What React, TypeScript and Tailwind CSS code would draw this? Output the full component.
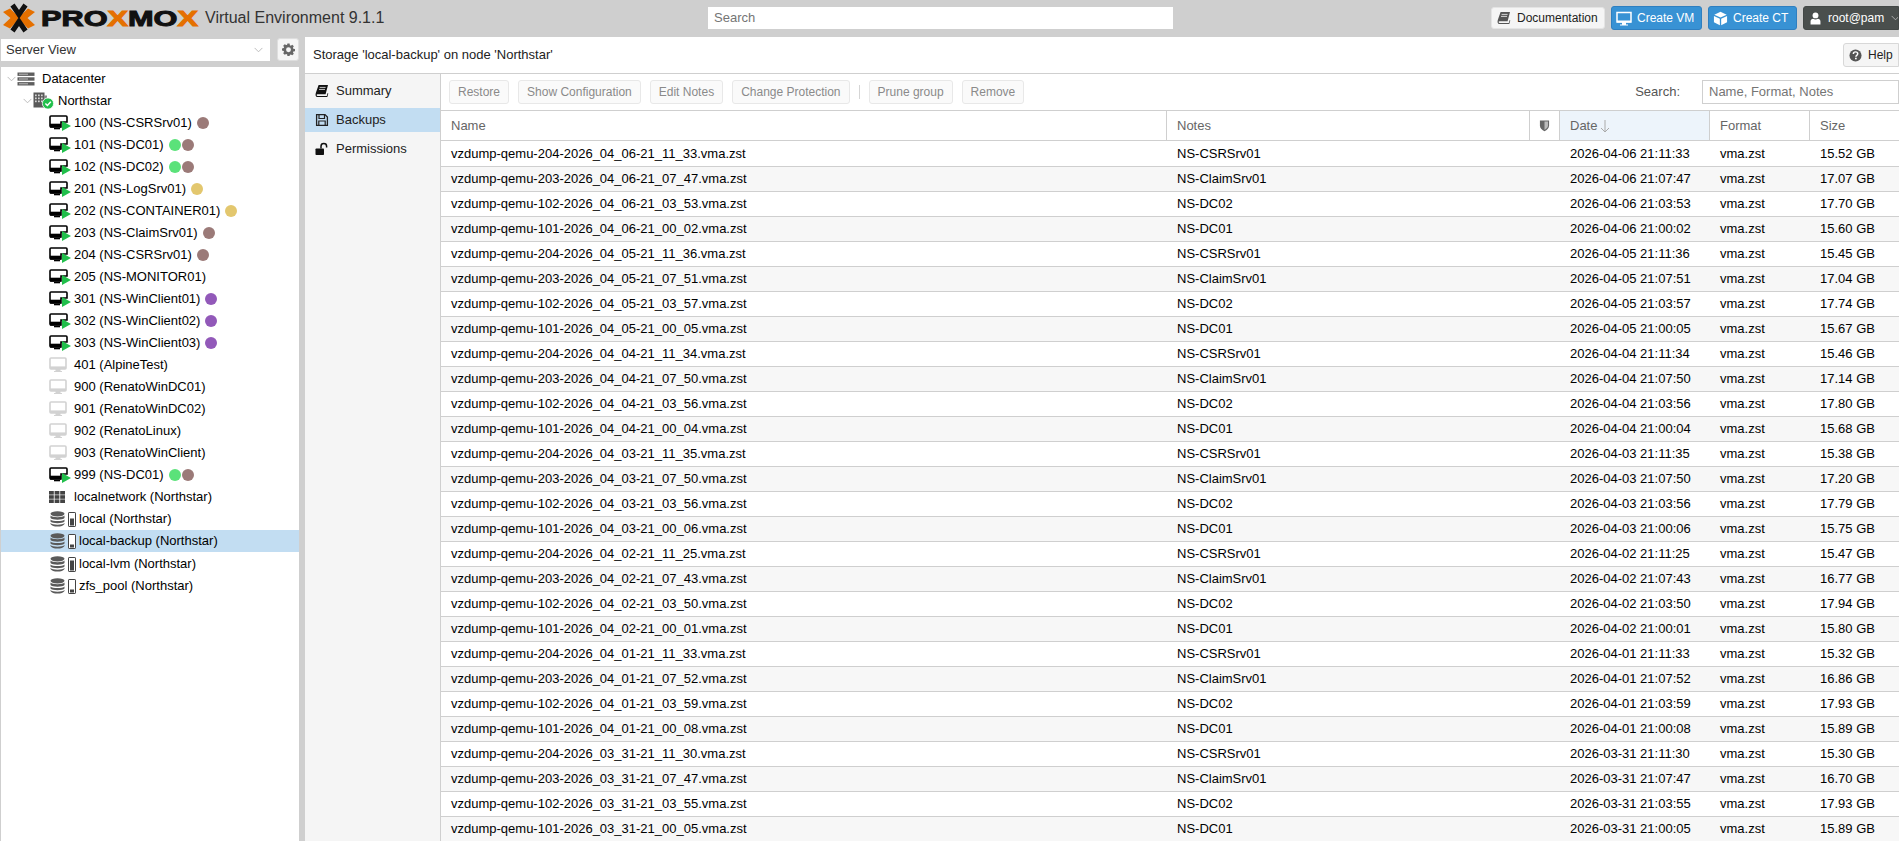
import React from "react";

const FONT = "font-['Liberation_Sans',Arial,sans-serif]";

const Logo = () => (
  <svg width="200" height="36" viewBox="0 0 200 36" className="block">
    <path d="M3 11 L10 7.5 L20 17 L10 27.5 L3 24 L10.5 17 Z" fill="#e57000" />
    <path d="M35 11 L28 7.5 L18 17 L28 27.5 L35 24 L27.5 17 Z" fill="#e57000" />
    <path d="M12.5 4 L19 13.5 L25.5 4 M12.5 30 L19 20.5 L25.5 30" fill="none" stroke="#111" strokeWidth="5" />
    <text
      x="41"
      y="24.5"
      textLength="157"
      lengthAdjust="spacingAndGlyphs"
      fontFamily="'Liberation Sans', Arial, sans-serif"
      fontWeight="700"
      fontSize="22"
      fill="#111"
      stroke="#111"
      strokeWidth="1"
    >
      PRO<tspan fill="#e57000" stroke="#e57000">X</tspan>MO<tspan fill="#e57000" stroke="#e57000">X</tspan>
    </text>
  </svg>
);

const BookIcon = ({ className = "" }: { className?: string }) => (
  <svg viewBox="0 0 14 14" width="14" height="14" className={`shrink-0 ${className}`}>
    <path d="M3.6 1 H13 L10.6 10.3 H2.4 C1.3 10.3 1.5 12 2.6 12 H11.8 L12.6 9 L13.3 9.4 L12.3 13 H2.4 C0.6 13 0.2 11 0.8 9 Z" fill="currentColor" />
    <path d="M4.6 3.4 H10.6 M4 5.4 H10" stroke="#f5f5f5" strokeWidth="0.8" />
  </svg>
);

const SaveIcon = () => (
  <svg viewBox="0 0 14 14" width="14" height="14" className="shrink-0">
    <path d="M1.6 1.6 H10 L12.4 4 V12.4 H1.6 Z" fill="none" stroke="#222" strokeWidth="1.3" />
    <path d="M4 2 V5.5 H9.5 V2" fill="none" stroke="#222" strokeWidth="1.2" />
    <path d="M3.8 12 V8 H10.2 V12" fill="none" stroke="#222" strokeWidth="1.2" />
  </svg>
);

const UnlockIcon = () => (
  <svg viewBox="0 0 14 14" width="14" height="14" className="shrink-0">
    <rect x="0.5" y="6.5" width="8.5" height="6.5" rx="0.8" fill="#111" />
    <path d="M6 6.5 V4.2 C6 2.6 7.2 1.6 8.8 1.6 C10.4 1.6 11.6 2.6 11.6 4.2 V5.6" fill="none" stroke="#111" strokeWidth="1.5" />
  </svg>
);

const GearIcon = () => (
  <svg viewBox="0 0 24 24" width="13" height="13" className="shrink-0">
    <path
      d="M10 1h4l.6 3.1c.6.2 1.2.5 1.7.8l2.7-1.7 2.8 2.8-1.7 2.7c.3.5.6 1.1.8 1.7L24 11v4l-3.1.6c-.2.6-.5 1.2-.8 1.7l1.7 2.7-2.8 2.8-2.7-1.7c-.5.3-1.1.6-1.7.8L14 24h-4l-.6-3.1c-.6-.2-1.2-.5-1.7-.8L5 21.8 2.2 19l1.7-2.7c-.3-.5-.6-1.1-.8-1.7L0 14v-4l3.1-.6c.2-.6.5-1.2.8-1.7L2.2 5 5 2.2l2.7 1.7c.5-.3 1.1-.6 1.7-.8Z M12 8a4.5 4.5 0 1 0 0 9 4.5 4.5 0 0 0 0-9Z"
      fill="#666"
      fillRule="evenodd"
    />
  </svg>
);

const Chevron = ({ className = "" }: { className?: string }) => (
  <svg viewBox="0 0 10 6" width="9" height="6" className={`shrink-0 ${className}`}>
    <path d="M0.7 0.7 L5 5 L9.3 0.7" fill="none" stroke="#b5b5b5" strokeWidth="1" />
  </svg>
);

const VmOn = () => (
  <svg viewBox="0 0 22 18" width="22" height="18" className="-mt-[2px] block shrink-0">
    <path d="M2 3 H17 A1 1 0 0 1 18 4 V9 H12 V14 H2 A1 1 0 0 1 1 13 V4 A1 1 0 0 1 2 3 Z" fill="#fff" stroke="#000" strokeWidth="1.6" />
    <path d="M1 10.7 H12 V14.6 H1 Z" fill="#000" />
    <path d="M5 15 H11 V16.3 H5 Z" fill="#000" />
    <path d="M13 8 L22 13 L13 18 Z" fill="#21bf4b" />
  </svg>
);

const VmOff = () => (
  <svg viewBox="0 0 18 16" width="18" height="16" className="block shrink-0">
    <path d="M1 2 A1 1 0 0 1 2 1 H16 A1 1 0 0 1 17 2 V11 A1 1 0 0 1 16 12 H2 A1 1 0 0 1 1 11 Z" fill="#fff" stroke="#d2d2d2" strokeWidth="1.6" />
    <path d="M1 9.4 H17 V12 H1 Z" fill="#d2d2d2" />
    <path d="M6.5 12 H11.5 V14 H13 V15 H5 V14 H6.5 Z" fill="#d2d2d2" />
  </svg>
);

const DatacenterIcon = () => (
  <svg viewBox="0 0 18 14" width="18" height="14" className="block shrink-0">
    <rect x="0.5" y="0.5" width="17" height="3.4" fill="#5e5e5e" />
    <rect x="0.5" y="5.3" width="17" height="3.4" fill="#5e5e5e" />
    <rect x="0.5" y="10.1" width="17" height="3.4" fill="#5e5e5e" />
    <rect x="2" y="1.7" width="9" height="1" fill="#bdbdbd" />
    <rect x="2" y="6.5" width="9" height="1" fill="#bdbdbd" />
    <rect x="2" y="11.3" width="9" height="1" fill="#bdbdbd" />
  </svg>
);

const NodeIcon = () => (
  <svg viewBox="0 0 22 18" width="22" height="18" className="block shrink-0">
    <rect x="0.5" y="0.5" width="11" height="15" fill="#5a5a5a" />
    <rect x="11" y="3.5" width="3" height="12" fill="#8a8a8a" />
    {[2, 5, 8].flatMap((x) =>
      [2.5, 5.5, 8.5].map((y) => <rect key={`${x}-${y}`} x={x} y={y} width="1.7" height="1.7" fill="#d5d5d5" />)
    )}
    <circle cx="15" cy="11.5" r="5.6" fill="#21bf4b" stroke="#fff" strokeWidth="0.8" />
    <path d="M12.4 11.5 L14.4 13.5 L17.8 9.8" fill="none" stroke="#fff" strokeWidth="1.5" />
  </svg>
);

const SdnIcon = () => (
  <svg viewBox="0 0 16 12" width="16" height="12" className="block shrink-0">
    {[0, 5.6, 11.2].flatMap((x) =>
      [0, 4.2, 8.4].map((y) => <rect key={`${x}-${y}`} x={x} y={y} width="4.8" height="3.6" fill="#444" />)
    )}
  </svg>
);

const StorageIcon = ({ fill }: { fill: number }) => (
  <span className="flex items-center gap-[3px]">
    <svg viewBox="0 0 15 16" width="15" height="16" className="block shrink-0">
      <ellipse cx="7.5" cy="2.8" rx="7" ry="2.6" fill="#5a5a5a" />
      <path d="M0.5 4.6 C2 6.8 13 6.8 14.5 4.6 V7 C13 9.2 2 9.2 0.5 7 Z" fill="#5a5a5a" />
      <path d="M0.5 8.4 C2 10.6 13 10.6 14.5 8.4 V10.6 C13 12.8 2 12.8 0.5 10.6 Z" fill="#5a5a5a" />
      <path d="M0.5 12 C2 14.2 13 14.2 14.5 12 V13 C13 16.4 2 16.4 0.5 13 Z" fill="#5a5a5a" />
    </svg>
    <svg viewBox="0 0 8 15" width="8" height="15" className="block shrink-0">
      <rect x="0.5" y="0.5" width="7" height="14" rx="0.6" fill="#fff" stroke="#444" />
      <rect x="2" y={13.5 - fill} width="4" height={fill} fill="#444" />
    </svg>
  </span>
);

const Dot = ({ color }: { color: string }) => (
  <span className="ml-[1px] inline-block h-[12px] w-[12px] rounded-full" style={{ backgroundColor: color }} />
);

const GREEN = "#5be27a";
const BROWN = "#9b7a78";
const YELLOW = "#e3c76e";
const PURPLE = "#9259b9";

type Vm = { name: string; on: boolean; tags: string[] };
const vms: Vm[] = [
  { name: "100 (NS-CSRSrv01)", on: true, tags: [BROWN] },
  { name: "101 (NS-DC01)", on: true, tags: [GREEN, BROWN] },
  { name: "102 (NS-DC02)", on: true, tags: [GREEN, BROWN] },
  { name: "201 (NS-LogSrv01)", on: true, tags: [YELLOW] },
  { name: "202 (NS-CONTAINER01)", on: true, tags: [YELLOW] },
  { name: "203 (NS-ClaimSrv01)", on: true, tags: [BROWN] },
  { name: "204 (NS-CSRSrv01)", on: true, tags: [BROWN] },
  { name: "205 (NS-MONITOR01)", on: true, tags: [] },
  { name: "301 (NS-WinClient01)", on: true, tags: [PURPLE] },
  { name: "302 (NS-WinClient02)", on: true, tags: [PURPLE] },
  { name: "303 (NS-WinClient03)", on: true, tags: [PURPLE] },
  { name: "401 (AlpineTest)", on: false, tags: [] },
  { name: "900 (RenatoWinDC01)", on: false, tags: [] },
  { name: "901 (RenatoWinDC02)", on: false, tags: [] },
  { name: "902 (RenatoLinux)", on: false, tags: [] },
  { name: "903 (RenatoWinClient)", on: false, tags: [] },
  { name: "999 (NS-DC01)", on: true, tags: [GREEN, BROWN] },
];

const storages = [
  { name: "local (Northstar)", fill: 7, sel: false, low: false },
  { name: "local-backup (Northstar)", fill: 3, sel: true, low: false },
  { name: "local-lvm (Northstar)", fill: 10, sel: false, low: true },
  { name: "zfs_pool (Northstar)", fill: 3, sel: false, low: true },
];

const TreeRow = ({ children, sel = false, low = false }: { children: React.ReactNode; sel?: boolean; low?: boolean }) => (
  <div className={`flex h-[22px] items-center whitespace-nowrap text-[13px] text-black ${sel ? "bg-[#c2ddf2]" : ""} ${low ? "pt-[2px]" : ""}`}>{children}</div>
);

const backups: [string, string, string, string, string, string][] = [
  ["204", "04_06", "11_33", "NS-CSRSrv01", "2026-04-06 21:11:33", "15.52"],
  ["203", "04_06", "07_47", "NS-ClaimSrv01", "2026-04-06 21:07:47", "17.07"],
  ["102", "04_06", "03_53", "NS-DC02", "2026-04-06 21:03:53", "17.70"],
  ["101", "04_06", "00_02", "NS-DC01", "2026-04-06 21:00:02", "15.60"],
  ["204", "04_05", "11_36", "NS-CSRSrv01", "2026-04-05 21:11:36", "15.45"],
  ["203", "04_05", "07_51", "NS-ClaimSrv01", "2026-04-05 21:07:51", "17.04"],
  ["102", "04_05", "03_57", "NS-DC02", "2026-04-05 21:03:57", "17.74"],
  ["101", "04_05", "00_05", "NS-DC01", "2026-04-05 21:00:05", "15.67"],
  ["204", "04_04", "11_34", "NS-CSRSrv01", "2026-04-04 21:11:34", "15.46"],
  ["203", "04_04", "07_50", "NS-ClaimSrv01", "2026-04-04 21:07:50", "17.14"],
  ["102", "04_04", "03_56", "NS-DC02", "2026-04-04 21:03:56", "17.80"],
  ["101", "04_04", "00_04", "NS-DC01", "2026-04-04 21:00:04", "15.68"],
  ["204", "04_03", "11_35", "NS-CSRSrv01", "2026-04-03 21:11:35", "15.38"],
  ["203", "04_03", "07_50", "NS-ClaimSrv01", "2026-04-03 21:07:50", "17.20"],
  ["102", "04_03", "03_56", "NS-DC02", "2026-04-03 21:03:56", "17.79"],
  ["101", "04_03", "00_06", "NS-DC01", "2026-04-03 21:00:06", "15.75"],
  ["204", "04_02", "11_25", "NS-CSRSrv01", "2026-04-02 21:11:25", "15.47"],
  ["203", "04_02", "07_43", "NS-ClaimSrv01", "2026-04-02 21:07:43", "16.77"],
  ["102", "04_02", "03_50", "NS-DC02", "2026-04-02 21:03:50", "17.94"],
  ["101", "04_02", "00_01", "NS-DC01", "2026-04-02 21:00:01", "15.80"],
  ["204", "04_01", "11_33", "NS-CSRSrv01", "2026-04-01 21:11:33", "15.32"],
  ["203", "04_01", "07_52", "NS-ClaimSrv01", "2026-04-01 21:07:52", "16.86"],
  ["102", "04_01", "03_59", "NS-DC02", "2026-04-01 21:03:59", "17.93"],
  ["101", "04_01", "00_08", "NS-DC01", "2026-04-01 21:00:08", "15.89"],
  ["204", "03_31", "11_30", "NS-CSRSrv01", "2026-03-31 21:11:30", "15.30"],
  ["203", "03_31", "07_47", "NS-ClaimSrv01", "2026-03-31 21:07:47", "16.70"],
  ["102", "03_31", "03_55", "NS-DC02", "2026-03-31 21:03:55", "17.93"],
  ["101", "03_31", "00_05", "NS-DC01", "2026-03-31 21:00:05", "15.89"],
];

const ToolBtn = ({ children }: { children: React.ReactNode }) => (
  <span className="flex h-[24px] items-center rounded-[3px] border border-[#e8e8e8] bg-[#fafafa] px-[8px] text-[12px] whitespace-nowrap text-[#8a8a8a]">
    {children}
  </span>
);

const HeadCell = ({ w, children, cls = "" }: { w: string; children?: React.ReactNode; cls?: string }) => (
  <div className={`flex h-full items-center border-r border-[#cfcfcf] pl-[10px] ${w} ${cls}`}>{children}</div>
);

export default function App() {
  return (
    <div className={`flex h-[841px] w-[1899px] flex-col overflow-hidden bg-[#cfcfcf] ${FONT} text-[13px]`}>
      {/* top bar */}
      <header className="relative flex h-[37px] shrink-0 items-center">
        <Logo />
        <span className="ml-[5px] -mt-[2px] text-[16px] whitespace-nowrap text-[#333]">Virtual Environment 9.1.1</span>
        <div className="absolute top-[7px] left-[708px] flex h-[22px] w-[465px] items-center bg-white pl-[6px] text-[13px] text-[#757575]">Search</div>
        <div className="ml-auto flex items-center gap-[6px] self-start pt-[6px]">
          <span className="flex h-[22px] w-[114px] items-center rounded-[3px] border border-[#e4e4e4] bg-[#f5f5f5] pl-[5px] text-[12px] text-[#222]">
            <BookIcon className="mr-[6px] text-[#555]" />
            Documentation
          </span>
          <span className="flex h-[24px] w-[91px] items-center gap-[5px] rounded-[3px] border border-[#2f7fc0] bg-[#3892d4] pl-[4px] text-[12px] text-white">
            <svg viewBox="0 0 16 15" width="16" height="15" className="shrink-0">
              <path d="M1 1.5 H15 V11 H1 Z" fill="none" stroke="#fff" strokeWidth="1.5" />
              <path d="M1 9.5 H15 V11.5 H1 Z M6 11.5 H10 V13.5 H12 V14.5 H4 V13.5 H6 Z" fill="#fff" />
            </svg>
            Create VM
          </span>
          <span className="flex h-[24px] w-[89px] items-center gap-[5px] rounded-[3px] border border-[#2f7fc0] bg-[#3892d4] pl-[4px] text-[12px] text-white">
            <svg viewBox="0 0 16 16" width="15" height="15" className="shrink-0">
              <path d="M8 .8 14.6 4 8 7 1.4 4Z" fill="#fff" />
              <path d="M1 5.2 7.3 8.2V15.3L1 12Z" fill="#fff" />
              <path d="M15 5.2 8.7 8.2V15.3L15 12Z" fill="#fff" />
            </svg>
            Create CT
          </span>
          <span className="flex h-[24px] w-[96px] items-center gap-[7px] overflow-hidden rounded-l-[3px] border border-[#434846] bg-[#4a4f4d] pl-[6px] text-[12px] whitespace-nowrap text-white">
            <svg viewBox="0 0 12 14" width="11" height="13" className="shrink-0">
              <circle cx="6" cy="3.6" r="3.2" fill="#fff" />
              <path d="M0.6 13.6 V10.4 C0.6 8.4 2 7.4 3.4 7.4 C4.8 8.4 7.2 8.4 8.6 7.4 C10 7.4 11.4 8.4 11.4 10.4 V13.6 Z" fill="#fff" />
            </svg>
            root@pam
            <Chevron />
          </span>
        </div>
      </header>

      <div className="flex min-h-0 flex-1">
        {/* left column */}
        <aside className="flex w-[299px] shrink-0 flex-col pl-[1px]">
          <div className="mt-[1px] flex h-[23px] shrink-0 items-center">
            <div className="flex h-[22px] w-[269px] items-center justify-between bg-white pr-[7px] pl-[5px] text-[13px] text-[#333]">
              Server View
              <Chevron />
            </div>
            <div className="ml-[7px] flex h-[23px] w-[22px] items-center justify-center rounded-[3px] border border-[#dedede] bg-[#f5f5f5]">
              <GearIcon />
            </div>
          </div>
          <div className="mt-[6px] min-h-0 flex-1 bg-white pt-[1px]">
            <TreeRow>
              <Chevron className="ml-[6px] mr-[1px]" />
              <span className="mr-[7px]"><DatacenterIcon /></span>
              Datacenter
            </TreeRow>
            <TreeRow>
              <Chevron className="ml-[22px] mr-[1px]" />
              <span className="mr-[3px]"><NodeIcon /></span>
              Northstar
            </TreeRow>
            {vms.map((v) => (
              <TreeRow key={v.name}>
                <span className="ml-[48px] flex w-[25px] shrink-0">{v.on ? <VmOn /> : <VmOff />}</span>
                <span className="mr-[4px]">{v.name}</span>
                {v.tags.map((c, i) => (
                  <Dot key={i} color={c} />
                ))}
              </TreeRow>
            ))}
            <TreeRow>
              <span className="ml-[48px] flex w-[25px] shrink-0"><SdnIcon /></span>
              localnetwork (Northstar)
            </TreeRow>
            {storages.map((s) => (
              <TreeRow key={s.name} sel={s.sel} low={s.low}>
                <span className="ml-[49px] flex w-[29px] shrink-0"><StorageIcon fill={s.fill} /></span>
                {s.name}
              </TreeRow>
            ))}
          </div>
        </aside>

        {/* main column */}
        <main className="ml-[6px] flex min-w-0 flex-1 flex-col bg-white">
          <div className="flex h-[37px] shrink-0 items-center justify-between border-b border-[#cfcfcf] pl-[8px] text-[13px] text-[#222]">
            Storage 'local-backup' on node 'Northstar'
            <span className="flex h-[24px] w-[56px] items-center gap-[6px] rounded-l-[3px] border border-[#d8d8d8] bg-[#f5f5f5] pl-[5px] text-[12px] text-[#222]">
              <svg viewBox="0 0 14 14" width="13" height="13" className="shrink-0">
                <circle cx="7" cy="7" r="6.5" fill="#555" />
                <path d="M4.7 5.3 C4.7 3.9 5.8 3.1 7 3.1 C8.3 3.1 9.4 3.9 9.4 5.2 C9.4 6.9 7.4 6.8 7.4 8.4" fill="none" stroke="#fff" strokeWidth="1.6" />
                <rect x="6.5" y="9.4" width="1.8" height="1.7" fill="#fff" />
              </svg>
              Help
            </span>
          </div>
          <div className="flex min-h-0 flex-1">
            {/* tabs */}
            <nav className="w-[136px] shrink-0 border-r border-[#cfcfcf] bg-[#f5f5f5] pt-[5px] text-[13px] text-[#222]">
              <div className="flex h-[24px] items-center gap-[7px] pl-[10px]">
                <BookIcon className="text-[#111]" />
                Summary
              </div>
              <div className="mt-[5px] flex h-[24px] items-center gap-[7px] bg-[#c2ddf2] pl-[10px]">
                <SaveIcon />
                Backups
              </div>
              <div className="mt-[5px] flex h-[24px] items-center gap-[7px] pl-[10px]">
                <UnlockIcon />
                Permissions
              </div>
            </nav>
            {/* grid */}
            <section className="flex min-w-0 flex-1 flex-col">
              <div className="flex h-[37px] shrink-0 items-center gap-[9px] border-b border-[#cfcfcf] pl-[8px]">
                <ToolBtn>Restore</ToolBtn>
                <ToolBtn>Show Configuration</ToolBtn>
                <ToolBtn>Edit Notes</ToolBtn>
                <ToolBtn>Change Protection</ToolBtn>
                <span className="h-[14px] w-px bg-[#d5d5d5]" />
                <ToolBtn>Prune group</ToolBtn>
                <ToolBtn>Remove</ToolBtn>
                <span className="ml-auto text-[13px] text-[#555]">Search:</span>
                <div className="ml-[13px] flex h-[24px] w-[197px] shrink-0 items-center overflow-hidden border border-[#cfcfcf] bg-white pl-[6px] text-[13px] whitespace-nowrap text-[#757575]">
                  Name, Format, Notes
                </div>
              </div>
              <div className="flex h-[30px] shrink-0 border-b border-[#cfcfcf] text-[13px] text-[#666]">
                <HeadCell w="w-[726px]">Name</HeadCell>
                <HeadCell w="w-[363px]">Notes</HeadCell>
                <HeadCell w="w-[30px]" cls="!pl-[9px]">
                  <svg viewBox="0 0 12 14" width="11" height="13" className="shrink-0">
                    <path d="M1 1.5 H11 V7 C11 10 8.5 12 6 13.2 C3.5 12 1 10 1 7 Z" fill="#666" />
                    <path d="M6 2.6 H9.8 V7 C9.8 9.2 8 10.8 6 11.8 Z" fill="#bbb" />
                  </svg>
                </HeadCell>
                <HeadCell w="w-[150px]" cls="bg-[#edf4fb]">
                  Date
                  <svg viewBox="0 0 10 14" width="10" height="14" className="ml-[3px] shrink-0">
                    <path d="M5 1 V13 M1 9 L5 13 L9 9" fill="none" stroke="#aaa" strokeWidth="1" />
                  </svg>
                </HeadCell>
                <HeadCell w="w-[100px]">Format</HeadCell>
                <HeadCell w="flex-1" cls="border-r-0">Size</HeadCell>
              </div>
              <div className="min-h-0 flex-1 overflow-hidden pt-[1px] text-[13px] text-black">
                {backups.map(([id, d, t, note, date, size], i) => (
                  <div key={i} className={`flex h-[25px] items-center border-b border-[#cfcfcf] ${i % 2 ? "bg-[#f7f7f7]" : "bg-white"}`}>
                    <span className="w-[726px] pl-[10px]">{`vzdump-qemu-${id}-2026_${d}-21_${t}.vma.zst`}</span>
                    <span className="w-[363px] pl-[10px]">{note}</span>
                    <span className="w-[30px]" />
                    <span className="w-[150px] pl-[10px]">{date}</span>
                    <span className="w-[100px] pl-[10px]">vma.zst</span>
                    <span className="flex-1 pl-[10px]">{size} GB</span>
                  </div>
                ))}
              </div>
            </section>
          </div>
        </main>
      </div>
    </div>
  );
}
